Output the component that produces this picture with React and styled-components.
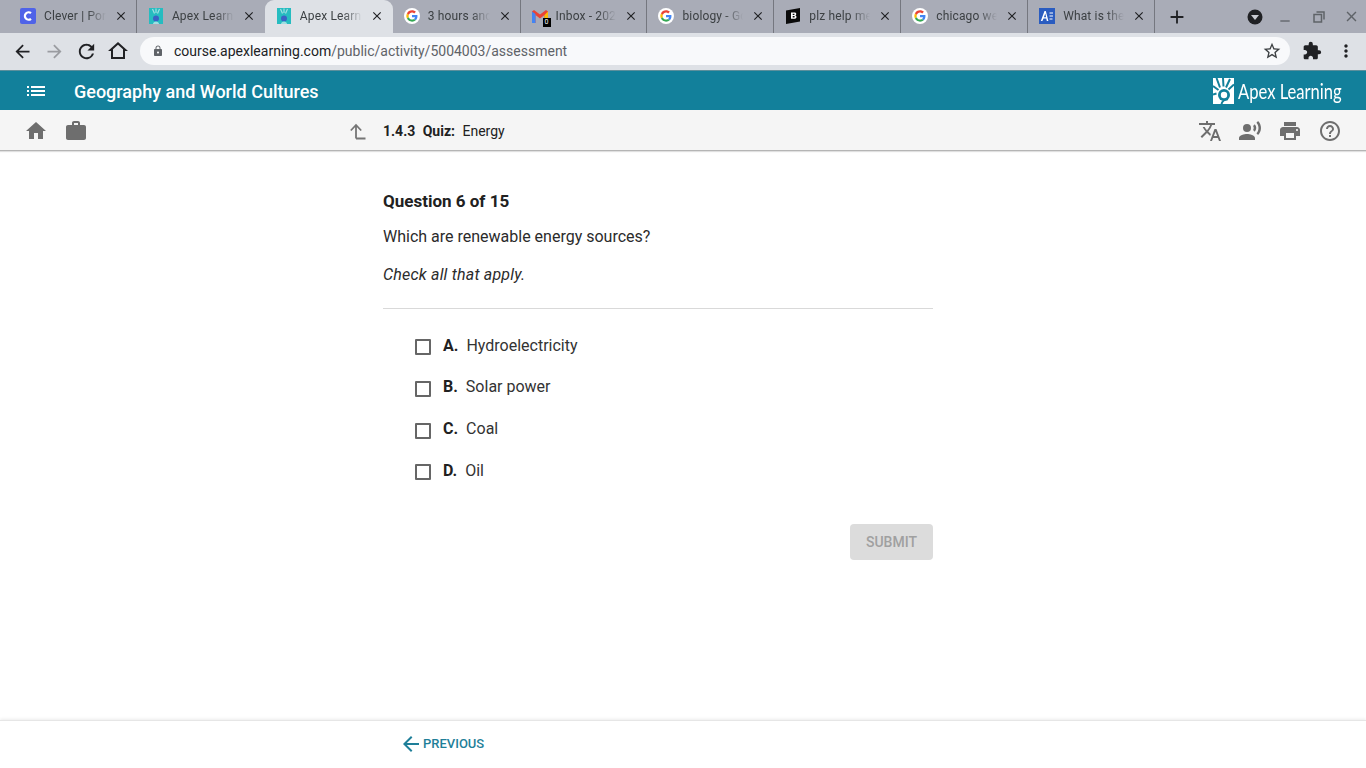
import React from "react";
import styled, { createGlobalStyle } from "styled-components";
import {
  MdHome,
  MdWork,
  MdTranslate,
  MdRecordVoiceOver,
  MdPrint,
  MdHelpOutline,
  MdList,
  MdArrowBack,
  MdArrowForward,
  MdRefresh,
  MdLock,
  MdStarBorder,
  MdExtension,
  MdMoreVert,
  MdClose,
  MdAdd,
  MdRemove,
} from "react-icons/md";

const GlobalStyle = createGlobalStyle`
  html, body { margin: 0; padding: 0; height: 100%; background: #fff; overflow: hidden; }
  body { font-family: Roboto, "Liberation Sans", sans-serif; color: #212121; }
`;

const GoogleIcon = () => (
  <svg width="16" height="16" viewBox="0 0 48 48">
    <circle cx="24" cy="24" r="24" fill="#fff" />
    <g transform="translate(7 7) scale(0.71)">
      <path fill="#EA4335" d="M24 9.500c3.500 0 6.700 1.200 9.200 3.600l6.900-6.900C35.900 2.400 30.500 0 24 0 14.600 0 6.500 5.400 2.600 13.200l8 6.200C12.500 13.600 17.800 9.500 24 9.500z" />
      <path fill="#4285F4" d="M47 24.500c0-1.600-.2-3.100-.4-4.500H24v9h12.900c-.6 3-2.200 5.500-4.700 7.200l7.700 6C44.400 38 47 31.800 47 24.500z" />
      <path fill="#FBBC05" d="M10.500 28.600c-.5-1.400-.8-3-.8-4.600s.3-3.200.8-4.600l-8-6.200C.9 16.500 0 20.100 0 24s.9 7.500 2.600 10.800l7.900-6.200z" />
      <path fill="#34A853" d="M24 48c6.500 0 11.900-2.100 15.900-5.800l-7.700-6c-2.100 1.400-4.900 2.300-8.200 2.300-6.200 0-11.500-4.200-13.400-9.800l-8 6.200C6.500 42.600 14.600 48 24 48z" />
    </g>
  </svg>
);

const CleverIcon = () => (
  <svg width="16" height="16" viewBox="0 0 16 16">
    <rect width="16" height="16" rx="2" fill="#4f63e8" />
    <path d="M11 5.200A3.700 3.700 0 1 0 11 10.800" fill="none" stroke="#fff" strokeWidth="2.200" />
  </svg>
);

const ApexFavicon = () => (
  <svg width="16" height="16" viewBox="0 0 16 16">
    <rect x="1" width="14" height="16" fill="#26bcc0" />
    <path d="M4.500 1l2 4.500M8 0.500v4.500M11.500 1l-2 4.500" stroke="#9fdfe2" strokeWidth="1.200" />
    <circle cx="8" cy="10.500" r="3" fill="#3a62c4" />
    <path d="M5 16c0-1.500 1.500-2.500 3-2.500s3 1 3 2.500z" fill="#9fdfe2" />
  </svg>
);

const GmailIcon = () => (
  <>
    <svg width="16" height="13" viewBox="0 0 16 13">
      <path d="M0 1.500V13h3.500V5L8 8.500 12.500 5v8H16V1.500L14 0 8 4.500 2 0z" fill="#ea4335" />
      <path d="M0 1.500V13h3.500V4z" fill="#4285f4" />
      <path d="M12.500 5v8H16V1.500z" fill="#fbbc05" />
    </svg>
    <MailBadge>0</MailBadge>
  </>
);

const BrainlyIcon = () => (
  <svg width="16" height="16" viewBox="0 0 16 16">
    <path d="M1 2.500L15 0v13.500L1 16z" fill="#0b0b0b" />
    <path d="M6 4.500h3.300c1.500 0 2 .7 2 1.600 0 .7-.4 1.100-.9 1.300.7.200 1.100.7 1.100 1.500 0 1.100-.8 1.800-2.200 1.800H6zm1.700 1.300v1.100h1.200c.5 0 .7-.2.700-.6s-.2-.5-.7-.5zm0 2.300v1.300h1.300c.6 0 .8-.3.800-.7s-.3-.6-.8-.6z" fill="#fff" />
  </svg>
);

const AnswersIcon = () => (
  <svg width="16" height="16" viewBox="0 0 16 16">
    <rect width="16" height="16" fill="#2a5cc0" />
    <path d="M1.800 13L5.500 3h1.300l2.600 10H7.800l-.5-2.500H4.500L3.400 13zM4.900 9.300h2.200l-.8-3.800z" fill="#fff" />
    <path d="M10.500 5h3.500M10.500 8h3.500M10.500 11h3" stroke="#fff" strokeWidth="1" />
  </svg>
);

const ProfileIcon = () => (
  <svg width="16" height="16" viewBox="0 0 16 16">
    <circle cx="8" cy="8" r="7.500" fill="#202124" />
    <path d="M4 6h8l-4 5z" fill="#c9cbd1" />
  </svg>
);

const HomeOutline = () => (
  <svg width="24" height="24" viewBox="0 0 24 24">
    <path d="M12 5.700l5 4.500V18H7v-7.800l5-4.500M12 3L2 12h3v8h14v-8h3L12 3z" fill="#202124" />
  </svg>
);

const UpLevel = () => (
  <svg width="18" height="18" viewBox="0 0 18 18">
    <path d="M8 16.500h9.500M8 16.500V3.500M2.800 8.500L8 3l5.200 5.500" fill="none" stroke="#757575" strokeWidth="1.800" />
  </svg>
);

const RestoreIcon = () => (
  <svg width="12" height="12" viewBox="0 0 12 12">
    <path d="M3.500 1h7.500v7.500M1 3.500h7.500V11H1z" fill="none" stroke="#5f6368" strokeWidth="1.500" />
  </svg>
);

const ApexMark = () => (
  <svg width="21" height="26" viewBox="0 0 21 26">
    <rect width="21" height="26" fill="#fff" />
    <g stroke="#12809b" strokeWidth="2" fill="none">
      <path d="M3.500 0l3.500 9.500M10 0l.5 8.500M17 1l-4 8.500M0 8l5.500 4M21 6.500l-5.500 5M0 16.500l3.500-1" />
    </g>
    <circle cx="11" cy="17" r="6" fill="#12809b" />
    <circle cx="11" cy="17" r="3.200" fill="#fff" />
    <path d="M8.500 26c.5-2.500 3-4.800 6.500-4.800" stroke="#12809b" strokeWidth="2" fill="none" />
  </svg>
);

const tabs = [
  { title: "Clever | Portal", icon: <CleverIcon /> },
  { title: "Apex Learning", icon: <ApexFavicon /> },
  { title: "Apex Learning", icon: <ApexFavicon />, active: true },
  { title: "3 hours and", icon: <GoogleIcon /> },
  { title: "Inbox - 2021", icon: <GmailIcon /> },
  { title: "biology - Go", icon: <GoogleIcon /> },
  { title: "plz help me", icon: <BrainlyIcon /> },
  { title: "chicago wea", icon: <GoogleIcon /> },
  { title: "What is the", icon: <AnswersIcon /> },
];

const options = [
  { letter: "A.", text: "Hydroelectricity" },
  { letter: "B.", text: "Solar power" },
  { letter: "C.", text: "Coal" },
  { letter: "D.", text: "Oil" },
];

export default function App() {
  return (
    <Page>
      <GlobalStyle />
      <TabStrip>
        {tabs.map((tab, i) => (
          <Tab
            key={i}
            $wide={i < 4}
            $active={tab.active}
            $noDivider={tab.active || (tabs[i + 1] && tabs[i + 1].active)}
          >
            <Favicon>{tab.icon}</Favicon>
            <TabTitle>{tab.title}</TabTitle>
            <MdClose size={14} color="#202124" />
          </Tab>
        ))}
        <NewTab>
          <MdAdd size={22} color="#202124" />
        </NewTab>
        <WindowControls>
          <ProfileIcon />
          <MdRemove size={16} color="#5f6368" />
          <RestoreIcon />
          <MdClose size={17} color="#5f6368" />
        </WindowControls>
      </TabStrip>

      <Toolbar>
        <NavButton><MdArrowBack size={21} color="#202124" /></NavButton>
        <NavButton><MdArrowForward size={21} color="#9a9ca1" /></NavButton>
        <NavButton><MdRefresh size={23} color="#202124" /></NavButton>
        <NavButton><HomeOutline /></NavButton>
        <Omnibox>
          <MdLock size={12} color="#5f6368" />
          <Url>course.apexlearning.com<UrlPath>/public/activity/5004003/assessment</UrlPath></Url>
          <MdStarBorder size={20} color="#3c4043" />
        </Omnibox>
        <ToolbarEnd>
          <MdExtension size={20} color="#202124" />
          <MdMoreVert size={20} color="#202124" />
        </ToolbarEnd>
      </Toolbar>

      <CourseBar>
        <MdList size={24} color="#fff" />
        <CourseTitle>Geography and World Cultures</CourseTitle>
        <Logo>
          <ApexMark />
          <LogoText>Apex Learning</LogoText>
        </Logo>
      </CourseBar>

      <ActivityBar>
        <IconGroup>
          <MdHome size={24} />
          <MdWork size={24} />
        </IconGroup>
        <Breadcrumb>
          <UpLevel />
          <Crumb>
            <b>1.4.3</b>
            <b>Quiz:</b>
            <span>Energy</span>
          </Crumb>
        </Breadcrumb>
        <IconGroup>
          <MdTranslate size={24} />
          <MdRecordVoiceOver size={24} />
          <MdPrint size={24} />
          <MdHelpOutline size={24} />
        </IconGroup>
      </ActivityBar>

      <Main>
        <QuestionNumber>Question 6 of 15</QuestionNumber>
        <Prompt>Which are renewable energy sources?</Prompt>
        <Hint>Check all that apply.</Hint>
        <Divider />
        <OptionList>
          {options.map((o) => (
            <Option key={o.letter}>
              <CheckBox />
              <Letter>{o.letter}</Letter>
              <span>{o.text}</span>
            </Option>
          ))}
        </OptionList>
        <SubmitRow>
          <SubmitButton disabled>SUBMIT</SubmitButton>
        </SubmitRow>
      </Main>

      <Footer>
        <PreviousLink>
          <MdArrowBack size={24} />
          PREVIOUS
        </PreviousLink>
      </Footer>
    </Page>
  );
}

const Page = styled.div`
  height: 768px;
  display: flex;
  flex-direction: column;
`;

const TabStrip = styled.div`
  height: 33px;
  background: #a9acb7;
  display: flex;
  align-items: stretch;
  padding-left: 9px;
  flex: none;
`;

const Tab = styled.div`
  width: ${(p) => (p.$wide ? "127.9px" : "126.9px")};
  flex: none;
  box-sizing: border-box;
  display: flex;
  align-items: center;
  padding: 0 8px 1px 11px;
  gap: 8px;
  font-size: 12px;
  letter-spacing: 0.15px;
  color: #3c4043;
  background: ${(p) => (p.$active ? "#dee1e6" : "transparent")};
  border-radius: ${(p) => (p.$active ? "9px 9px 0 0" : "0")};
  border-right: 1px solid ${(p) => (p.$noDivider ? "transparent" : "#75777f")};
  & > svg { flex: none; }
`;

const Favicon = styled.span`
  position: relative;
  width: 16px;
  height: 16px;
  flex: none;
  display: flex;
  align-items: center;
  justify-content: center;
`;

const MailBadge = styled.span`
  position: absolute;
  right: -3px;
  bottom: -3px;
  width: 8px;
  height: 9px;
  background: #000;
  color: #fff;
  font-size: 7px;
  line-height: 9px;
  letter-spacing: 0;
  text-align: center;
`;

const TabTitle = styled.span`
  flex: 1;
  min-width: 0;
  white-space: nowrap;
  overflow: hidden;
  -webkit-mask-image: linear-gradient(to right, #000 70%, transparent 100%);
  mask-image: linear-gradient(to right, #000 70%, transparent 100%);
`;

const NewTab = styled.div`
  width: 44px;
  display: flex;
  align-items: center;
  justify-content: center;
  flex: none;
`;

const WindowControls = styled.div`
  margin-left: auto;
  display: flex;
  align-items: center;
  gap: 18px;
  padding-right: 6px;
  & > svg:first-child { margin-right: -4px; }
  & > svg:nth-child(2) { margin: 8px 2px 0 0; }
`;

const Toolbar = styled.div`
  height: 37px;
  box-sizing: border-box;
  padding: 0 0 1px 6px;
  background: #dee1e6;
  display: flex;
  align-items: center;
  flex: none;
`;

const NavButton = styled.div`
  width: 32px;
  height: 32px;
  display: flex;
  align-items: center;
  justify-content: center;
  flex: none;
`;

const Omnibox = styled.div`
  width: 1150px;
  height: 28px;
  margin-left: 6px;
  box-sizing: border-box;
  background: #f8f9fb;
  border-radius: 14px;
  display: flex;
  align-items: center;
  padding: 0 8px 0 12px;
  flex: none;
`;

const Url = styled.div`
  flex: 1;
  margin-left: 10px;
  font-size: 14px;
  color: #202124;
`;

const UrlPath = styled.span`
  color: #5f6368;
`;

const ToolbarEnd = styled.div`
  display: flex;
  align-items: center;
  gap: 14px;
  margin-left: 12px;
`;

const CourseBar = styled.div`
  height: 40px;
  box-sizing: border-box;
  background: #12809b;
  border-top: 1px solid #5c8f9c;
  display: flex;
  align-items: center;
  padding: 0 24px;
  flex: none;
`;

const CourseTitle = styled.div`
  margin: 1px 0 0 26px;
  font-size: 18px;
  font-weight: 500;
  color: #fff;
`;

const Logo = styled.div`
  margin-left: auto;
  display: flex;
  align-items: center;
  gap: 4px;
  margin-right: 1px;
`;

const LogoText = styled.div`
  font-family: Lato, sans-serif;
  font-size: 21px;
  color: #fff;
  width: 103px;
  white-space: nowrap;
  transform: scaleX(0.79);
  transform-origin: left center;
`;

const ActivityBar = styled.div`
  height: 41px;
  box-sizing: border-box;
  background: #f5f5f5;
  border-bottom: 1px solid #b5b5b5;
  box-shadow: 0 1px 1px rgba(0, 0, 0, 0.12);
  display: flex;
  align-items: center;
  padding: 1px 24px 0;
  flex: none;
`;

const IconGroup = styled.div`
  display: flex;
  gap: 16px;
  color: #6e6e6e;
  &:last-child { margin-left: auto; }
`;

const Breadcrumb = styled.div`
  margin-left: 260px;
  display: flex;
  align-items: center;
  gap: 17px;
`;

const Crumb = styled.div`
  display: flex;
  gap: 7.5px;
  font-size: 14px;
  color: #212121;
  b { font-weight: 700; }
`;

const Main = styled.main`
  flex: 1;
  width: 550px;
  margin-left: 383px;
  padding-top: 39px;
`;

const QuestionNumber = styled.h2`
  margin: 0;
  font-size: 17px;
  line-height: 22px;
  font-weight: 700;
  color: #212121;
`;

const Prompt = styled.p`
  margin: 14px 0 0;
  font-size: 16px;
  line-height: 22px;
  color: #2b2b2b;
`;

const Hint = styled.p`
  margin: 16px 0 0;
  font-size: 16px;
  line-height: 22px;
  font-style: italic;
  letter-spacing: 0.2px;
  color: #2b2b2b;
`;

const Divider = styled.hr`
  margin: 22px 0 0;
  border: 0;
  border-top: 1px solid #d9d9d9;
`;

const OptionList = styled.div`
  margin-top: 25px;
  padding-left: 32px;
  display: flex;
  flex-direction: column;
  gap: 19.8px;
`;

const Option = styled.label`
  display: flex;
  align-items: center;
  height: 22px;
  font-size: 16px;
  color: #333;
`;

const CheckBox = styled.span`
  width: 12px;
  height: 12px;
  border: 2px solid #666;
  border-radius: 1px;
  margin: 4px 12px 0 0;
  flex: none;
`;

const Letter = styled.b`
  font-weight: 700;
  margin-right: 8px;
  color: #212121;
`;

const SubmitRow = styled.div`
  margin-top: 42.6px;
  display: flex;
  justify-content: flex-end;
`;

const SubmitButton = styled.button`
  width: 83px;
  height: 36px;
  border: 0;
  border-radius: 4px;
  background: #dcdcdc;
  color: #a0a0a0;
  font-family: Roboto, sans-serif;
  font-size: 14px;
  font-weight: 500;
`;

const Footer = styled.footer`
  height: 48px;
  box-sizing: border-box;
  flex: none;
  border-top: 1px solid #e6e6e6;
  box-shadow: 0 -1px 3px rgba(0, 0, 0, 0.08);
  padding: 0 0 2px 399px;
  display: flex;
  align-items: center;
`;

const PreviousLink = styled.a`
  display: flex;
  align-items: center;
  font-size: 13px;
  font-weight: 500;
  color: #1f7f99;
`;
